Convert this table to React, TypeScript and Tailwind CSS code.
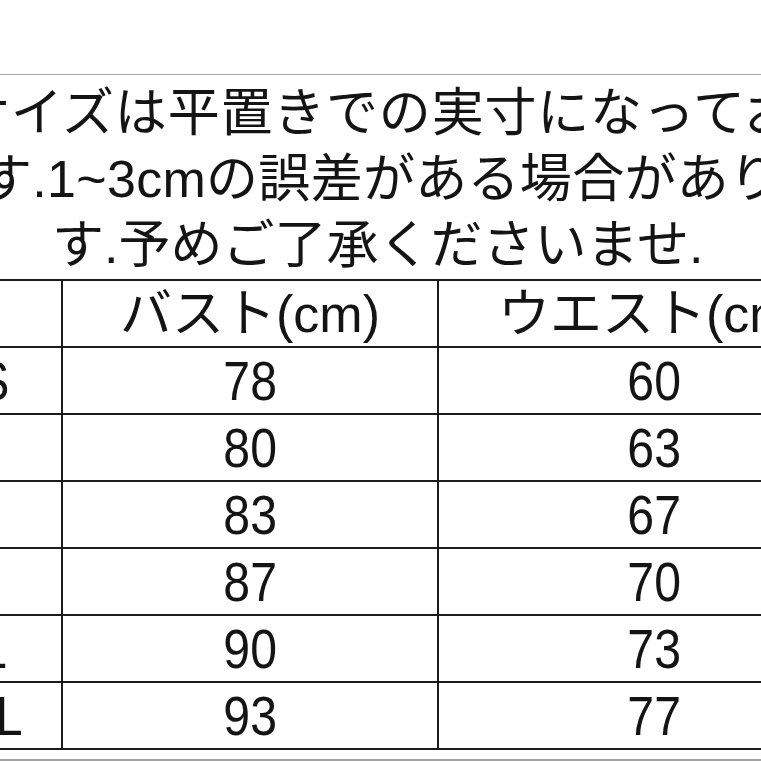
import React from "react";

const rows = [
  { size: "XS", bust: "78", waist: "60" },
  { size: "S", bust: "80", waist: "63" },
  { size: "M", bust: "83", waist: "67" },
  { size: "L", bust: "87", waist: "70" },
  { size: "XL", bust: "90", waist: "73" },
  { size: "XXL", bust: "93", waist: "77" },
];

const font = { fontFamily: '"Liberation Sans", "Noto Sans CJK JP", sans-serif' };

function Num({ children }: { children: React.ReactNode }) {
  return <span className="inline-block origin-center scale-x-[0.86] text-[56px] leading-none">{children}</span>;
}

export default function App() {
  return (
    <div className="relative h-[761px] w-[761px] overflow-hidden bg-white text-[#141414]" style={font}>
      <div className="h-[74px]" />
      <div className="h-px bg-[#a3a3a3]" />

      {/* note text, wraps beyond the crop on both sides */}
      <div className="h-[204px] pt-[5px] text-[52px] whitespace-nowrap">
        <div className="ml-[-42px] h-[66px] leading-[66px] tracking-[0.8px]">サイズは平置きでの実寸になっておりま</div>
        <div className="ml-[-20px] h-[66px] leading-[66px] tracking-[0.3px]">す.1~3cmの誤差がある場合がありま</div>
        <div className="h-[66px] pl-[52px] leading-[66px]">す.予めご了承くださいませ.</div>
      </div>

      <div className="ml-[-107px] grid w-[980px] grid-cols-[168px_374px_430px] gap-[2px] bg-[#1c1c1c] py-[2px]">
        <div className="h-[65px] bg-white" />
        <div className="flex h-[65px] items-center justify-center bg-white text-[52px] leading-none">バスト(cm)</div>
        <div className="flex h-[65px] items-center justify-center bg-white text-[52px] leading-none">ウエスト(cm)</div>
        {rows.map((r) => (
          <React.Fragment key={r.size}>
            <div className="flex h-[65px] items-center justify-center bg-white">
              <Num>{r.size}</Num>
            </div>
            <div className="flex h-[65px] items-center justify-center bg-white">
              <Num>{r.bust}</Num>
            </div>
            <div className="flex h-[65px] items-center justify-center bg-white">
              <Num>{r.waist}</Num>
            </div>
          </React.Fragment>
        ))}
      </div>

      <div className="h-[9px]" />
      <div className="h-[2px] bg-[#a3a3a3]" />
    </div>
  );
}
